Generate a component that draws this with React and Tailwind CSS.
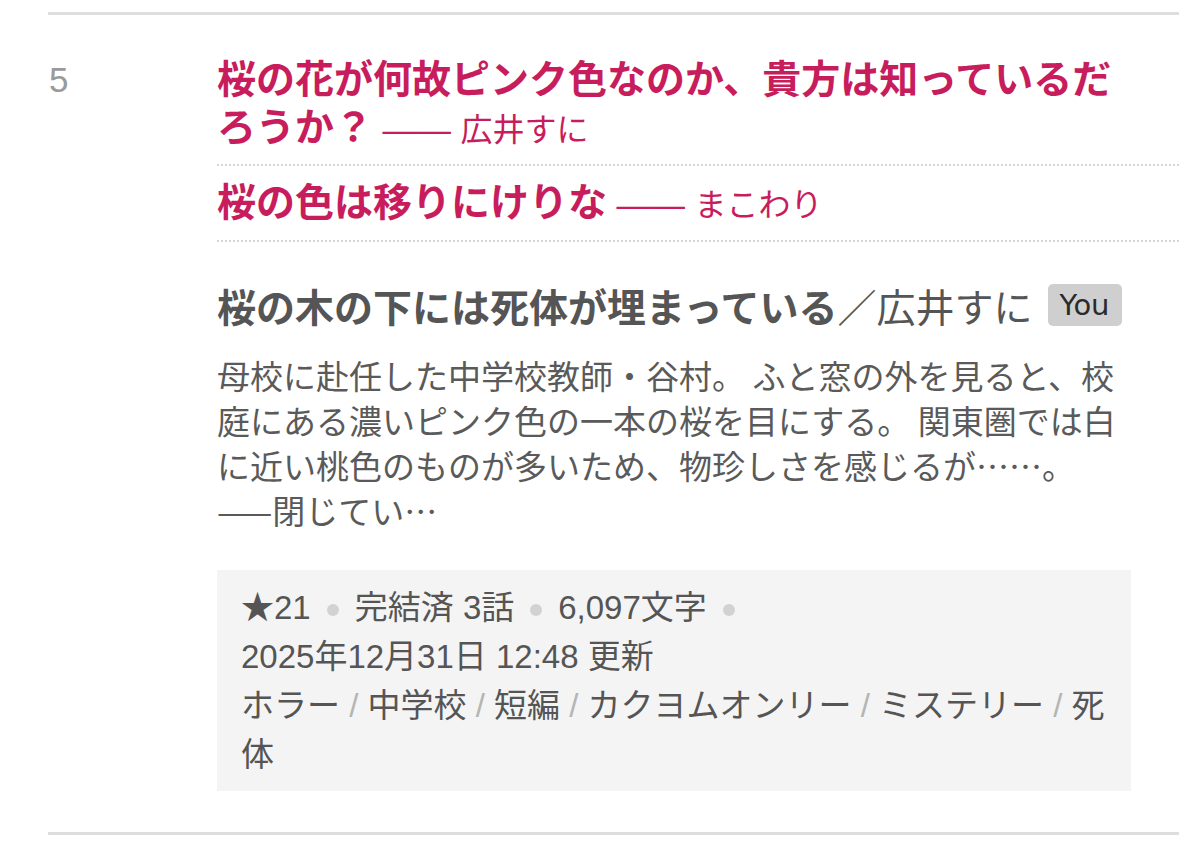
function PinkTitle({ title, author, first }) {
  return (
    <div className={`border-b-2 border-dotted border-[#d6d6d6] pr-[48px] ${first ? 'pb-[12px]' : 'py-[13px]'}`}>
      <p className="text-[39px] leading-[48px] font-bold text-[#c81d5c] font-['Liberation_Serif','Noto_Sans_CJK_JP',serif]">
        {title}{' '}
        <span className="text-[34px] leading-none">——</span>{' '}
        <span className="font-normal text-[32px] leading-none font-['Noto_Sans_CJK_JP',sans-serif]">{author}</span>
      </p>
    </div>
  )
}

function Dot() {
  return <span className="inline-block w-[12px] h-[12px] rounded-full bg-[#d2d2d2] mx-[16px] align-middle" />
}

function Slash() {
  return <span className="text-[#b5b5b5]"> / </span>
}

export default function App() {
  const tags = ['ホラー', '中学校', '短編', 'カクヨムオンリー', 'ミステリー', '死体']

  return (
    <div className="w-[1179px] h-[866px] bg-white pt-[12px] font-['Noto_Sans_CJK_JP',sans-serif]">
      <div className="ml-[48px] border-t-[3px] border-b-[3px] border-[#dedede] flex pt-[41px] pb-[41px]">
        {/* 順位 */}
        <div className="w-[169px] shrink-0 text-[35px] leading-[48px] text-[#9a9a9a] font-['Liberation_Sans',sans-serif] pl-[1px]">
          5
        </div>

        <div className="flex-1 min-w-0">
          <PinkTitle first title="桜の花が何故ピンク色なのか、貴方は知っているだろうか？" author="広井すに" />
          <PinkTitle title="桜の色は移りにけりな" author="まこわり" />

          <div className="pr-[48px]">
            <h2 className="mt-[39px] text-[39px] leading-[48px] text-[#555] flex items-center">
              <span className="font-bold">桜の木の下には死体が埋まっている</span>
              <span>／広井すに</span>
              <span className="ml-[15px] inline-flex items-center justify-center w-[74px] h-[42px] rounded-[5px] bg-[#cfcfcf] text-[#2a2a2a] text-[29px] font-['DejaVu_Sans',sans-serif]">
                You
              </span>
            </h2>

            <p className="mt-[24px] text-[33px] leading-[45px] text-[#5a5a5a]">
              母校に赴任した中学校教師・谷村。 ふと窓の外を見ると、校庭にある濃いピンク色の一本の桜を目にする。 関東圏では白に近い桃色のものが多いため、物珍しさを感じるが……。 ——閉じてい…
            </p>

            <div className="mt-[37px] bg-[#f4f4f4] pl-[24px] pr-[16px] pt-[13px] pb-[12px] text-[33px] leading-[49px] text-[#555] font-['Liberation_Sans','Noto_Sans_CJK_JP',sans-serif]">
              <div>
                <span>★21</span>
                <Dot />
                <span>完結済 3話</span>
                <Dot />
                <span>6,097文字</span>
                <Dot />
              </div>
              <div>2025年12月31日 12:48 更新</div>
              <p>
                {tags.map((t, i) => (
                  <span key={t}>
                    {i > 0 && <Slash />}
                    {t}
                  </span>
                ))}
              </p>
            </div>
          </div>
        </div>
      </div>
    </div>
  )
}
